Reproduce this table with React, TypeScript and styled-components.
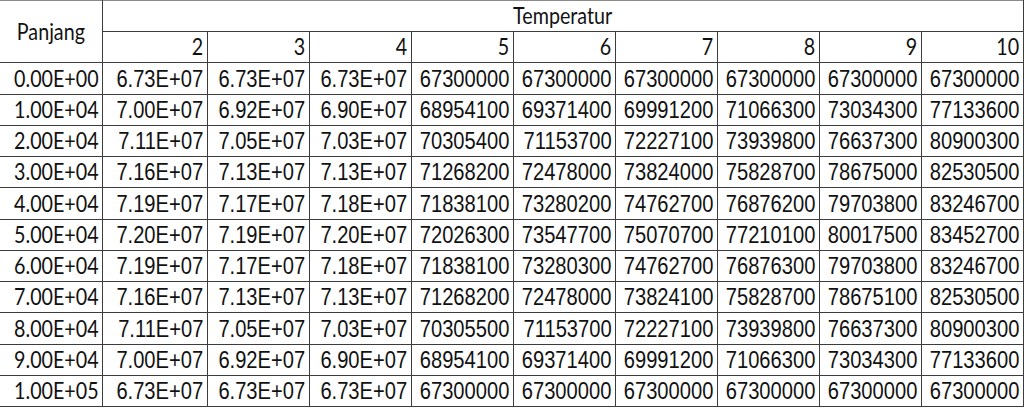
import React from "react";
import styled, { createGlobalStyle } from "styled-components";

const Global = createGlobalStyle`
  html, body { margin: 0; padding: 0; background: #ffffff; }
  body { width: 1024px; height: 409px; overflow: hidden; }
`;

const Table = styled.table`
  border-collapse: collapse;
  table-layout: fixed;
  width: 1022px;
  color: #111;
`;

const Row = styled.tr`
  height: 31.25px;
`;

const Cell = styled.td<{ $calibri?: boolean; $noLeft?: boolean }>`
  border: 1px solid #3c3c3c;
  border-left: ${(p) => (p.$noLeft ? "none" : "1px solid #3c3c3c")};
  padding: 0 3px 2px 3px;
  vertical-align: bottom;
  white-space: nowrap;
  line-height: 26px;
  font-family: ${(p) => (p.$calibri ? '"Lato", "Liberation Sans", sans-serif' : '"Liberation Sans", Arial, sans-serif')};
  font-size: ${(p) => (p.$calibri ? "22.5px" : "23px")};
`;

const HeadCell = styled(Cell)`
  vertical-align: middle;
  padding-bottom: 0;
`;

const TopRow = styled.tr`
  height: 31px;
  & > td { border-top: 1px solid #8a8a8a; }
`;

const Inner = styled.div<{ $align?: "right" | "center" }>`
  display: flex;
  justify-content: ${(p) => (p.$align === "center" ? "center" : "flex-end")};
`;

const Squeeze = styled.span<{ $origin?: string }>`
  flex-shrink: 0;
  display: inline-block;
  transform: scaleX(0.875);
  transform-origin: ${(p) => p.$origin ?? "right"} center;
`;

const cols = [2, 3, 4, 5, 6, 7, 8, 9, 10];

const data: [string, string[]][] = [
  ["0.00E+00", ["6.73E+07", "6.73E+07", "6.73E+07", "67300000", "67300000", "67300000", "67300000", "67300000", "67300000"]],
  ["1.00E+04", ["7.00E+07", "6.92E+07", "6.90E+07", "68954100", "69371400", "69991200", "71066300", "73034300", "77133600"]],
  ["2.00E+04", ["7.11E+07", "7.05E+07", "7.03E+07", "70305400", "71153700", "72227100", "73939800", "76637300", "80900300"]],
  ["3.00E+04", ["7.16E+07", "7.13E+07", "7.13E+07", "71268200", "72478000", "73824000", "75828700", "78675000", "82530500"]],
  ["4.00E+04", ["7.19E+07", "7.17E+07", "7.18E+07", "71838100", "73280200", "74762700", "76876200", "79703800", "83246700"]],
  ["5.00E+04", ["7.20E+07", "7.19E+07", "7.20E+07", "72026300", "73547700", "75070700", "77210100", "80017500", "83452700"]],
  ["6.00E+04", ["7.19E+07", "7.17E+07", "7.18E+07", "71838100", "73280300", "74762700", "76876300", "79703800", "83246700"]],
  ["7.00E+04", ["7.16E+07", "7.13E+07", "7.13E+07", "71268200", "72478000", "73824100", "75828700", "78675100", "82530500"]],
  ["8.00E+04", ["7.11E+07", "7.05E+07", "7.03E+07", "70305500", "71153700", "72227100", "73939800", "76637300", "80900300"]],
  ["9.00E+04", ["7.00E+07", "6.92E+07", "6.90E+07", "68954100", "69371400", "69991200", "71066300", "73034300", "77133600"]],
  ["1.00E+05", ["6.73E+07", "6.73E+07", "6.73E+07", "67300000", "67300000", "67300000", "67300000", "67300000", "67300000"]],
];

export default function App() {
  return (
    <>
      <Global />
      <Table>
        <colgroup>
          <col style={{ width: 102 }} />
          <col style={{ width: 105 }} />
          {cols.slice(1).map((c) => (
            <col key={c} style={{ width: 102 }} />
          ))}
        </colgroup>
        <tbody>
          <TopRow>
            <HeadCell rowSpan={2} $calibri $noLeft>
              <Inner $align="center">
                <Squeeze $origin="center">Panjang</Squeeze>
              </Inner>
            </HeadCell>
            <HeadCell colSpan={9} $calibri>
              <Inner $align="center">
                <Squeeze $origin="center">Temperatur</Squeeze>
              </Inner>
            </HeadCell>
          </TopRow>
          <Row>
            {cols.map((c) => (
              <Cell key={c} $calibri>
                <Inner>
                  <Squeeze>{c}</Squeeze>
                </Inner>
              </Cell>
            ))}
          </Row>
          {data.map(([p, vals]) => (
            <Row key={p}>
              <Cell $calibri $noLeft>
                <Inner>
                  <Squeeze>{p}</Squeeze>
                </Inner>
              </Cell>
              {vals.map((v, i) => (
                <Cell key={i}>
                  <Inner>
                    <Squeeze>{v}</Squeeze>
                  </Inner>
                </Cell>
              ))}
            </Row>
          ))}
        </tbody>
      </Table>
    </>
  );
}
